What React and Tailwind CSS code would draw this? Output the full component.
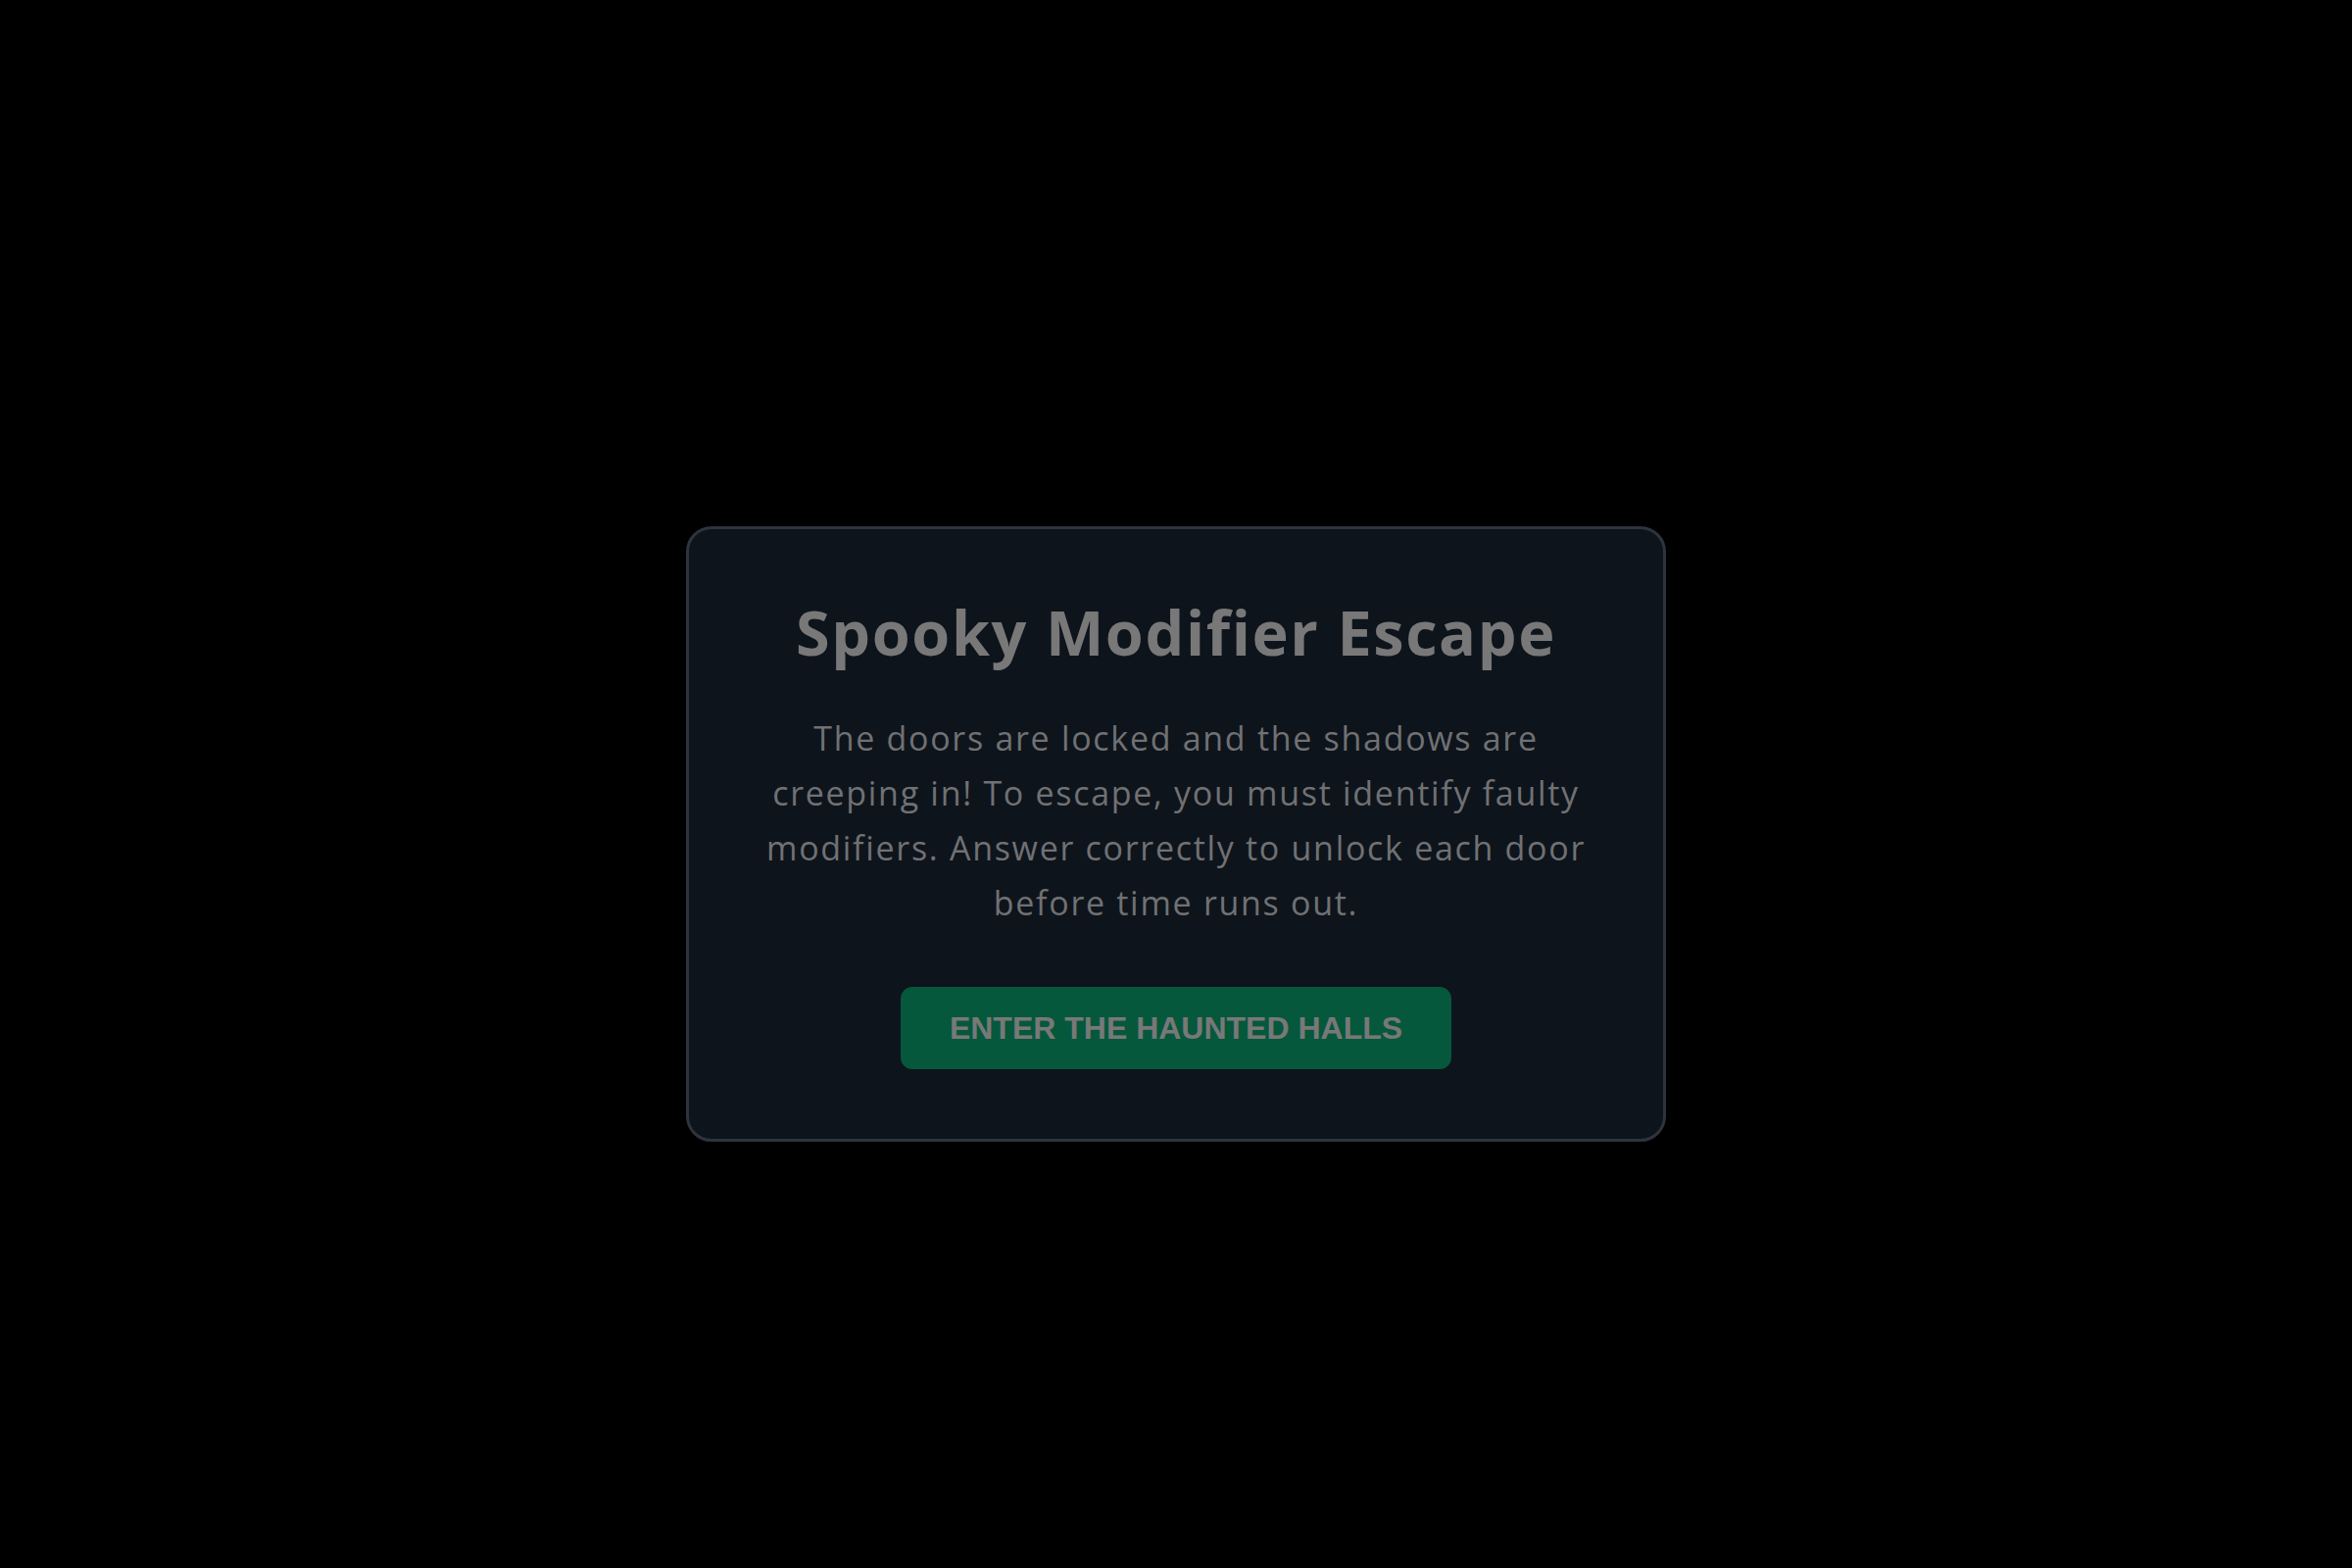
export default function App() {
  const body = "The doors are locked and the shadows are creeping in! To escape, you must identify faulty modifiers. Answer correctly to unlock each door before time runs out.";

  return (
    <div className="min-h-screen bg-black flex items-center justify-center pt-[102px]">
      {/* Intro card */}
      <div className="w-[1000px] rounded-[26px] border-[3px] border-[#2e343e] bg-[#0e141b] px-[62px] pt-[67px] pb-[71px] flex flex-col items-center text-center">
        <h1 className="font-['Open_Sans',sans-serif] font-bold text-[63px] leading-[1.2] tracking-[0.025em] text-[#787878]">
          Spooky Modifier Escape
        </h1>
        <p className="mt-[43px] font-['Open_Sans',sans-serif] text-[34px] leading-[56px] tracking-[0.05em] text-[#707174]">
          {body}
        </p>
        <button
          type="button"
          className="mt-[58px] rounded-xl bg-[#06583c] px-[50px] py-6 font-['Liberation_Sans',Arial,sans-serif] font-bold text-[32px] leading-9 text-[#787878]"
        >
          ENTER THE HAUNTED HALLS
        </button>
      </div>
    </div>
  );
}
